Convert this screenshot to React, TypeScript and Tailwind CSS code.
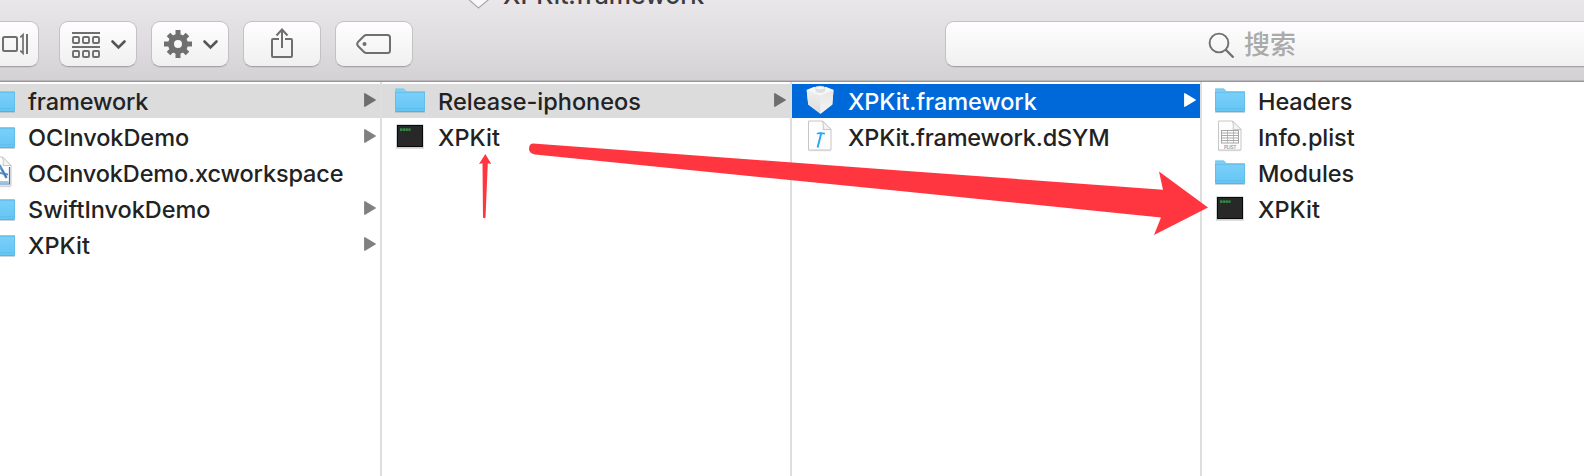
import type { ReactNode } from "react";

type Kind = "folder" | "exec" | "workspace" | "framework" | "dsym" | "plist";
type Item = { name: string; kind: Kind; open?: boolean; tone?: "gray" | "blue"; tracking: string };

function Brick() {
  return (
    <>
      <path d="M1.700 6 8.500 3.300Q15 1.600 21.500 3.300L28.500 6 27.300 20.500 15.500 29.800 3.200 20.500Z" fill="#f0f0f0" />
      <path d="M1.700 6 15.500 11.500v18.300L3.200 20.500Z" fill="url(#brickLeft)" />
      <path d="M28.500 6 15.500 11.500v18.300L27.300 20.500Z" fill="url(#brickRight)" />
      <path d="M1.700 6 8.500 3.300Q15 1.600 21.500 3.300L28.500 6 15.500 11.500Z" fill="#f7f7f7" />
      <path d="M10.500 4v3c0 2.600 9.500 2.600 9.500 0V4Z" fill="#e0e0e0" />
      <ellipse cx="15.250" cy="4.100" rx="4.750" ry="1.900" fill="#f4f4f4" stroke="#cfcfcf" strokeWidth=".6" />
    </>
  );
}

function Page() {
  return (
    <>
      <path d="M3.500 1.500h14l8 8v21h-22Z" fill="#999" opacity=".25" transform="translate(0 .8)" />
      <path d="M3.500 1h14l8.500 8.500v20.500h-22.500Z" fill="#fdfdfd" stroke="#c6c6c6" strokeWidth="1" />
      <path d="M17.500 1q1.500 4 .500 8.500h8Z" fill="#f4f4f4" stroke="#c2c2c2" strokeWidth=".9" />
    </>
  );
}

function FileIcon({ kind }: { kind: Kind }) {
  if (kind === "folder")
    return (
      <svg className="h-[34px] w-[30px] shrink-0" viewBox="0 0 30 34">
        <path d="M0 28.600h30" stroke="#b5b5b5" strokeWidth=".8" opacity=".7" />
        <path d="M0 27V5.200Q0 4.200 1 4.200H8.200Q9 4.200 9.600 4.900L11.500 7H29Q30 7 30 8V27Z" fill="#7fcef2" />
        <path d="M.4 8.400H10l1.500-.9H29.600V27H.4Z" fill="url(#folderFace)" />
        <path d="M0 8.600H30M0 24.700H30" stroke="#5ab9e6" strokeWidth=".8" opacity=".8" />
        <path d="M.4 27.600H29.600" stroke="#4fa9d8" strokeWidth="1" />
        <path d="M.3 8v19.500M29.700 8v19.500" stroke="#58b4e0" strokeWidth=".7" />
      </svg>
    );
  if (kind === "exec")
    return (
      <svg className="h-[34px] w-[30px] shrink-0" viewBox="0 0 30 34">
        <path d="M1.200 4.200h27.300l.3 23.600H.9Z" fill="#c9d3d6" />
        <path d="M1 28.200h27.800" stroke="#999" strokeWidth=".8" opacity=".6" />
        <rect x="2" y="5" width="26" height="22" fill="#080808" />
        <rect x="3" y="6" width="24" height="20" fill="#282828" />
        <path d="M5 9.600h2.300m.5 0h2.300m.5 0h2.300m.5 0h2.200" stroke="#37a84c" strokeWidth="2.200" />
        <path d="M5.500 9.700h10" stroke="#28452d" strokeWidth=".6" strokeDasharray="1.200 1" />
      </svg>
    );
  if (kind === "framework")
    return (
      <svg className="h-[34px] w-[30px] shrink-0" viewBox="0 0 30 34"><Brick /></svg>
    );
  if (kind === "workspace")
    return (
      <svg className="h-[34px] w-[30px] shrink-0" viewBox="0 0 30 34">
        <Page />
        <path d="M6 10V28h18.500V11" fill="none" stroke="#3c7ab8" strokeWidth="1.200" />
        <path d="M7 26h16.500" stroke="#4b8bc5" strokeWidth="1" />
        <path d="M14.500 9 21.500 22" stroke="#5d94c8" strokeWidth="2.600" />
        <path d="M12 16.500 23 18.500" stroke="#5d94c8" strokeWidth="2" />
        <path d="m17 13.500 4.500 8" stroke="#2e6cab" strokeWidth="1" />
      </svg>
    );
  return (
    <svg className="h-[34px] w-[30px] shrink-0" viewBox="0 0 30 34">
      <Page />
      {kind === "dsym" ? (
        <>
          <path d="m16.300 13-3.700 14.500" stroke="#22a7f0" strokeWidth="1.900" />
          <path d="M11.600 13.600q1.500-1.800 4-1.400l4.300.5v1.700l-4.300-.4-4 .3Z" fill="#22a7f0" />
        </>
      ) : (
        <>
          <rect x="6.500" y="10.500" width="17" height="12.500" fill="#fff" stroke="#a5a5a5" />
          <path d="M6.500 13h17M6.500 15.500h17M6.500 18h17M6.500 20.500h17" stroke="#aaa" strokeWidth="1.100" />
          <path d="M12.500 10.500v12.500M18.500 10.500v12.500" stroke="#aaa" strokeWidth=".8" />
          <text x="9" y="28.800" fontSize="4.800" fontWeight="600" fill="#999" textLength="12.500" fontFamily="Inter, sans-serif">PLIST</text>
        </>
      )}
    </svg>
  );
}

function Row({ item }: { item: Item }) {
  const bg = item.tone === "blue" ? "bg-[#0069d9] text-white" : item.tone === "gray" ? "bg-[#dcdcdc] text-[#222]" : "text-[#222]";
  const arrow = item.tone === "blue" ? "text-white" : item.tone === "gray" ? "text-[#6e6e6e]" : "text-[#808080]";
  return (
    <div className={`flex h-[34px] items-center pl-[13px] pr-1 ${bg}`}>
      <FileIcon kind={item.kind} />
      <span className={`ml-[13px] flex-1 whitespace-nowrap pt-0.5 text-[23.500px] leading-[34px] font-[450] ${item.tracking}`}>{item.name}</span>
      {item.open && (
        <svg className={`h-3.5 w-3 shrink-0 -translate-y-px ${arrow}`} viewBox="0 0 12 14">
          <path d="M.8.800 11.200 7 .8 13.200Z" fill="currentColor" stroke="currentColor" strokeWidth="1.400" strokeLinejoin="round" />
        </svg>
      )}
    </div>
  );
}

const columns: Item[][] = [
  [
    { name: "framework", kind: "folder", open: true, tone: "gray", tracking: "tracking-[-0.12px]" },
    { name: "OCInvokDemo", kind: "folder", open: true, tracking: "tracking-[-0.05px]" },
    { name: "OCInvokDemo.xcworkspace", kind: "workspace", tracking: "tracking-[-0.14px]" },
    { name: "SwiftInvokDemo", kind: "folder", open: true, tracking: "tracking-[-0.04px]" },
    { name: "XPKit", kind: "folder", open: true, tracking: "tracking-[0px]" },
  ],
  [
    { name: "Release-iphoneos", kind: "folder", open: true, tone: "gray", tracking: "tracking-[0px]" },
    { name: "XPKit", kind: "exec", tracking: "tracking-[0px]" },
  ],
  [
    { name: "XPKit.framework", kind: "framework", open: true, tone: "blue", tracking: "tracking-[-0.12px]" },
    { name: "XPKit.framework.dSYM", kind: "dsym", tracking: "tracking-[-0.18px]" },
  ],
  [
    { name: "Headers", kind: "folder", tracking: "tracking-[-0.1px]" },
    { name: "Info.plist", kind: "plist", tracking: "tracking-[-0.05px]" },
    { name: "Modules", kind: "folder", tracking: "tracking-[-0.1px]" },
    { name: "XPKit", kind: "exec", tracking: "tracking-[0px]" },
  ],
];

function ToolButton({ children }: { children: ReactNode }) {
  return (
    <button className="h-[46px] w-[78px] shrink-0 rounded-[9px] border border-[#c3c1c4] border-b-[#a5a3a6] bg-linear-to-b from-[#fefefe] to-[#f0f0f0] shadow-[0_1px_0_rgba(0,0,0,0.06)]">
      <svg className="h-11 w-[76px]" viewBox="0 0 76 44" fill="none" stroke="#6f6f6f" strokeWidth="2">
        {children}
      </svg>
    </button>
  );
}

export default function App() {
  return (
    <div className="relative flex h-[476px] w-[1584px] flex-col overflow-hidden bg-white font-[Inter,'Noto_Sans_CJK_SC',sans-serif]">
      <svg className="absolute h-0 w-0">
        <linearGradient id="folderFace" x1="0" y1="0" x2="0" y2="1">
          <stop stopColor="#7bd0fa" />
          <stop offset="1" stopColor="#65c5f5" />
        </linearGradient>
        <linearGradient id="brickLeft" x1="0" y1="0" x2="0" y2="1">
          <stop stopColor="#efefef" />
          <stop offset="1" stopColor="#dcdcdc" />
        </linearGradient>
        <linearGradient id="brickRight" x1="0" y1="0" x2="0" y2="1">
          <stop stopColor="#e6e6e6" />
          <stop offset="1" stopColor="#f4f4f4" />
        </linearGradient>
      </svg>
      <header className="flex h-[82px] shrink-0 flex-col border-b border-[#969496] bg-linear-to-b from-[#e9e7ea] via-[#dfdde0] to-[#d3d1d4] shadow-[inset_0_-1px_0_#b9b7b9]">
        <div className="flex h-[21px] shrink-0 pl-[464px]">
          <svg className="-mt-[21px] h-[30px] w-[30px] shrink-0" viewBox="0 0 30 30">
            <path d="M1 5 14.500 1 28 5 26.500 19 14.500 29 3 19Z" fill="#f8f8f8" stroke="#aaa" strokeWidth="1.200" />
          </svg>
          <span className="-mt-[21px] ml-[9px] h-8 whitespace-nowrap text-[25px] leading-8 font-[450] tracking-[-0.1px] text-[#3d3b3e]">XPKit.framework</span>
        </div>
        <div className="-ml-[39px] flex">
          <ToolButton>
            <rect x="41" y="15" width="14" height="14" rx="1.500" />
            <path d="M65 12v20" />
            <path d="M58.300 15.300 61 12.800V31.200L58.300 28.700" strokeWidth="1.700" />
          </ToolButton>
          <div className="ml-5 flex gap-3.5">
            <ToolButton>
              <path d="M12 11h28M12 25h28" />
              <g strokeWidth="1.900">
                <rect x="13" y="15" width="6" height="6" rx="1" /><rect x="23" y="15" width="6" height="6" rx="1" /><rect x="33" y="15" width="6" height="6" rx="1" />
                <rect x="13" y="29" width="6" height="6" rx="1" /><rect x="23" y="29" width="6" height="6" rx="1" /><rect x="33" y="29" width="6" height="6" rx="1" />
              </g>
              <path d="m52.500 19.500 6 6 6-6" stroke="#555" strokeWidth="2.600" strokeLinecap="round" />
            </ToolButton>
            <ToolButton>
              <circle cx="26" cy="22" r="7" strokeWidth="6" />
              <g strokeWidth="5">
                <path d="M26 8v5M26 31v5M12 22h5M35 22h5" />
                <path d="m16.500 12.500 4 4M31.500 27.500l4 4M35.500 12.500l-4 4M20.500 27.500l-4 4" />
              </g>
              <path d="m52.500 19.500 6 6 6-6" stroke="#555" strokeWidth="2.600" strokeLinecap="round" />
            </ToolButton>
            <ToolButton>
              <path d="M35 17H29Q28 17 28 18v16q0 1 1 1h18q1 0 1-1V18q0-1-1-1H41" />
              <path d="M38 8v18M32.500 13.500 38 7.500l5.500 6" />
            </ToolButton>
            <ToolButton>
              <path d="M30.500 13H51.500q2.500 0 2.500 2.500v13Q54 31 51.500 31H30.500q-1.500 0-2.500-1l-6-6q-1.600-2 0-4l6-6q1-1 2.500-1Z" />
              <circle cx="28.500" cy="22" r="2" fill="#6f6f6f" stroke="none" />
            </ToolButton>
          </div>
          <div className="-mr-5 ml-[532px] flex h-[46px] flex-1 items-center rounded-[9px] border border-[#c3c1c4] border-b-[#a5a3a6] bg-linear-to-b from-[#fefefe] to-[#f0f0f0] pl-[262px] shadow-[0_1px_0_rgba(0,0,0,0.06)]">
            <svg className="h-7 w-7 shrink-0" viewBox="0 0 28 28" fill="none" stroke="#6f6f6f" strokeWidth="1.900">
              <circle cx="11" cy="13" r="9.400" />
              <path d="m17.500 19.500 8 8" strokeWidth="2.300" />
            </svg>
            <span className="ml-2 pt-0.5 text-[26px] leading-[42px] font-medium text-[#aaa]">搜索</span>
          </div>
        </div>
      </header>
      <main className="-ml-7 flex flex-1">
        {columns.map((items, i) => (
          <section key={i} className={`box-content flex w-[408px] shrink-0 flex-col gap-0.5 pt-0.5 ${i < 3 ? "border-r-2 border-[#dedede]" : ""}`}>
            {items.map((item) => <Row key={item.name} item={item} />)}
          </section>
        ))}
      </main>
      <svg className="pointer-events-none absolute inset-0 h-[476px] w-[1584px]" viewBox="0 0 1584 476" fill="#ff3540">
        <path d="M533 143.500 900 170.500 1163 189.700 1159 171.500 1208 207.500 1154 235 1161 217.500 900 191 535 154.600Q529.500 153.500 529 149.500 529 143.300 533 143.500Z" />
        <path d="M485.300 154 491.300 164 487.800 163.200 485.500 217.500Q484.200 219 483 217.500L482.500 163.200 479 164Z" />
      </svg>
    </div>
  );
}
